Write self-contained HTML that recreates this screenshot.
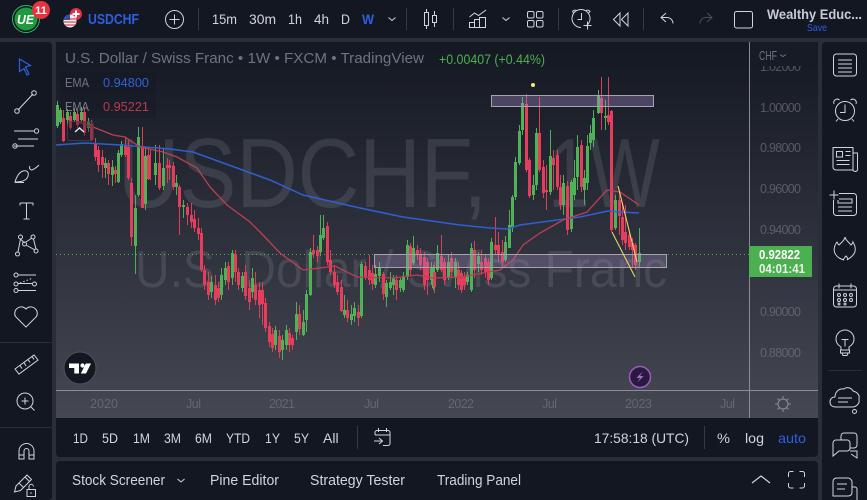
<!DOCTYPE html>
<html><head><meta charset="utf-8"><title>USDCHF</title>
<style>
html,body{margin:0;padding:0;background:#2a2e39;width:867px;height:500px;overflow:hidden}
svg{display:block}
text{font-family:"Liberation Sans",sans-serif}
.i{fill:none;stroke:#d1d4dc;stroke-width:1}
.ax{fill:#787b86;font-size:12.5px;opacity:.62}
.soft{filter:blur(.3px)}
</style></head><body>
<svg xmlns="http://www.w3.org/2000/svg" width="867" height="500" viewBox="0 0 867 500">
<defs><linearGradient id="bg" x1="0" y1="0" x2="0" y2="1"><stop offset="0" stop-color="#141823"/><stop offset="1" stop-color="#454853"/></linearGradient></defs>
<rect width="867" height="500" fill="#2a2e39"/>
<path d="M0 500v-5l3 5z" fill="#c23a7a"/>
<!-- chart -->
<rect x="56" y="42" width="762" height="376" fill="url(#bg)"/>
<text x="118" y="207" font-size="98" fill="#fff" fill-opacity=".1" textLength="369" lengthAdjust="spacingAndGlyphs">USDCHF,</text>
<text x="548" y="207" font-size="98" fill="#fff" fill-opacity=".1" textLength="112" lengthAdjust="spacingAndGlyphs">1W</text>
<text x="135" y="287" font-size="52" fill="#fff" fill-opacity=".1" textLength="532" lengthAdjust="spacingAndGlyphs">U.S. Dollar / Swiss Franc</text>
<rect x="60" y="72" width="96" height="46" fill="#131722" fill-opacity=".35"/>
<path d="M56 254.500H749" stroke="#4caf50" stroke-dasharray="1 3" fill="none"/>
<g class="soft">
<!-- candles: wicks -->
<path fill="none" stroke="#4fae57" stroke-width="1" d="M57.500 101V128M60.500 108V124M67.500 109V126M74.500 108V122M81.500 107V122M88.500 118V132M105.500 158V178M112.500 160V186M118.500 150V183M121.500 141V157M135.500 195V274M138.500 127V197M145.500 148V210M155.500 145V185M163.500 148V190M176.500 175V195M183.500 200V218M211.500 276V298M221.500 268V300M225.500 262V285M232.500 250V285M242.500 272V292M252.500 268V298M275.500 326V350M282.500 335V360M286.500 325V350M296.500 302V340M303.500 310V336M306.500 290V332M310.500 248V296M320.500 215V256M323.500 215V240M344.500 295V318M351.500 305V325M354.500 302V322M361.500 262V318M375.500 265V288M379.500 262V282M386.500 280V307M390.500 272V290M393.500 275V295M400.500 278V292M403.500 272V292M407.500 240V280M413.500 236V265M431.500 262V285M433.500 265V290M437.500 245V272M448.500 255V280M455.500 258V288M467.500 272V285M471.500 243V292M478.500 252V272M491.500 238V280M505.500 236V262M509.500 210V248M512.500 195V232M515.500 157V200M519.500 125V165M522.500 97V135M533.500 175V200M536.500 128V190M550.500 130V195M563.500 175V215M571.500 180V232M574.500 160V200M577.500 135V190M584.500 170V205M587.500 135V190M590.500 125V150M593.500 110V147M598.500 90V114M605.500 100V130M615.500 195V230M639.500 228V268"/>
<path fill="none" stroke="#e23b58" stroke-width="1" d="M63.500 110V142M70.500 112V130M77.500 110V128M84.500 108V136M91.500 120V141M95.500 138V161M98.500 146V172M102.500 150V178M108.500 160V185M115.500 166V183M125.500 137V157M128.500 140V180M131.500 178V246M142.500 127V208M148.500 148V180M150.500 150V180M159.500 145V190M167.500 158V183M169.500 160V180M173.500 162V190M179.500 185V235M187.500 203V225M191.500 203V228M194.500 210V232M198.500 218V240M201.500 228V272M204.500 265V290M208.500 272V300M215.500 275V305M218.500 282V302M228.500 262V290M235.500 250V282M238.500 268V290M245.500 265V300M249.500 280V310M255.500 272V305M259.500 282V318M262.500 282V325M265.500 298V332M269.500 322V347M272.500 328V352M279.500 330V358M289.500 328V352M292.500 335V350M299.500 305V335M313.500 235V258M317.500 246V262M327.500 222V265M330.500 250V275M334.500 265V288M337.500 275V295M341.500 280V312M347.500 300V322M358.500 305V326M365.500 262V280M369.500 255V285M372.500 265V290M383.500 272V300M396.500 275V300M410.500 243V275M417.500 245V260M420.500 248V270M424.500 252V290M427.500 258V295M434.500 262V293M441.500 235V272M444.500 258V285M451.500 252V278M458.500 262V290M461.500 270V293M464.500 272V290M474.500 241V278M481.500 250V275M485.500 255V278M488.500 258V285M495.500 217V255M498.500 232V262M502.500 240V268M526.500 94V172M529.500 158V198M539.500 97V172M543.500 160V198M546.500 165V210M553.500 150V190M557.500 150V190M560.500 175V210M567.500 181V235M581.500 140V192M601.500 77V130M608.500 77V125M611.500 110V232M619.500 190V235M622.500 202V245M625.500 205V250M629.500 232V250M632.500 238V268M635.500 243V270"/>
<!-- candles: bodies -->
<path fill="none" stroke="#4fb257" stroke-width="3" d="M57.500 105V126M60.500 110V122M67.500 112V120M74.500 112V120M81.500 112V120M88.500 122V128M105.500 163V168M112.500 167V175M118.500 153V182M121.500 144V155M135.500 208V246M138.500 137V195M145.500 156V204M155.500 163V175M163.500 168V186M176.500 183V187M183.500 205V207M211.500 282V292M221.500 275V295M225.500 268V280M232.500 253V278M242.500 276V288M252.500 278V292M275.500 330V345M282.500 340V350M286.500 330V345M296.500 314V332M303.500 322V335M306.500 294V320M310.500 252V295M320.500 235V252M323.500 228V238M344.500 310V315M351.500 314V320M354.500 308V316M361.500 264V316M375.500 274V285M379.500 268V276M386.500 283V297M390.500 282V288M393.500 278V285M400.500 280V288M403.500 276V290M407.500 245V277M413.500 248V263M431.500 268V280M433.500 268V288M437.500 253V270M448.500 262V278M455.500 262V278M467.500 275V282M471.500 248V290M478.500 256V264M491.500 242V278M505.500 242V260M509.500 225V248M512.500 197V228M515.500 162V197M519.500 131V163M522.500 103V130M533.500 185V195M536.500 133V185M550.500 156V192M563.500 183V205M571.500 182V229M574.500 178V195M577.500 147V177M584.500 178V190M587.500 146V183M590.500 133V143M593.500 118V140M598.500 95V113M605.500 116V118M615.500 200V228M639.500 253V262"/>
<path fill="none" stroke="#e83c5c" stroke-width="3" d="M63.500 118V141M70.500 116V128M77.500 114V125M84.500 112V133M91.500 124V140M95.500 143V157M98.500 150V165M102.500 157V165M108.500 163V174M115.500 170V174M125.500 146V155M128.500 147V178M131.500 183V237M142.500 146V208M148.500 155V179M159.500 163V188M167.500 165V168M169.500 165V168M173.500 166V187M179.500 187V207M187.500 207V215M191.500 215V222M194.500 219V228M198.500 228V234M201.500 233V270M204.500 270V285M208.500 282V295M215.500 285V300M218.500 288V298M228.500 266V282M235.500 254V272M238.500 272V285M245.500 272V296M249.500 288V302M255.500 285V300M259.500 290V305M262.500 290V304M265.500 303V328M269.500 326V342M272.500 334V348M279.500 336V352M289.500 333V345M292.500 338V345M299.500 314V329M313.500 250V254M317.500 250V256M327.500 226V262M330.500 260V272M334.500 272V285M337.500 282V292M341.500 287V311M347.500 310V318M358.500 312V318M365.500 266V277M369.500 270V280M372.500 273V284M383.500 274V294M396.500 280V290M410.500 246V270M417.500 250V255M420.500 255V265M424.500 257V285M427.500 262V280M434.500 272V287M441.500 256V270M444.500 262V280M451.500 258V272M458.500 270V285M461.500 273V290M464.500 276V285M474.500 250V270M481.500 262V270M485.500 258V272M488.500 262V280M495.500 245V250M498.500 245V255M502.500 252V262M526.500 104V170M529.500 160V196M539.500 133V170M543.500 167V193M546.500 190V192M553.500 158V165M557.500 155V187M560.500 187V205M567.500 186V230M581.500 145V187M601.500 98V113M608.500 115V122M611.500 111V230M619.500 200V216M622.500 217V240M625.500 232V243M629.500 235V247M632.500 243V250M635.500 245V265"/>
<!-- EMAs -->
<path fill="none" stroke="#2f5fd0" stroke-width="1.500" d="M56 145L85 143L120 145L170 149L193 152L237 168L270 180L303 195L360 208L403 217L460 225L490 228L507 229L520 225L557 220L580 217L608 211L620 212L639 213"/>
<path fill="none" stroke="#bb3f52" stroke-width="1.300" d="M78 122L93 127L113 135L125 137L140 147L163 152L177 157L197 168L210 187L227 205L250 222L260 232L280 253L303 270L320 268L335 266L357 277L393 278L417 275L433 278L463 277L487 272L500 270L513 260L523 245L540 233L563 220L587 212L607 190L620 192L639 205"/>
<!-- zones -->
<rect x="491.500" y="95.500" width="162" height="11" fill="#a68bc4" fill-opacity=".36" stroke="#a4a4af"/>
<rect x="374.500" y="254.500" width="292" height="13" fill="#a68bc4" fill-opacity=".3" stroke="#a4a4af"/>
<path d="M618 186L637 262M612 232L635 277" stroke="#e8d468" stroke-width="1.100" fill="none"/>
<circle cx="533" cy="85" r="2" fill="#fdea70"/>
</g>
<!-- legend -->
<text x="65" y="63" font-size="15" fill="#6f7380" textLength="359" lengthAdjust="spacingAndGlyphs">U.S. Dollar / Swiss Franc • 1W • FXCM • TradingView</text>
<text x="439" y="64" font-size="13.500" fill="#4caf50" textLength="106" lengthAdjust="spacingAndGlyphs">+0.00407 (+0.44%)</text>
<text x="65" y="87" font-size="13" fill="#6f7380" textLength="24" lengthAdjust="spacingAndGlyphs">EMA</text>
<text x="103" y="87" font-size="13" fill="#2e62d8" textLength="46" lengthAdjust="spacingAndGlyphs">0.94800</text>
<text x="65" y="111" font-size="13" fill="#7a7d88" textLength="24" lengthAdjust="spacingAndGlyphs">EMA</text>
<text x="103" y="111" font-size="13" fill="#b53c4f" textLength="46" lengthAdjust="spacingAndGlyphs">0.95221</text>
<rect x="67.500" y="121.500" width="26" height="19" rx="3" fill="#131722" fill-opacity=".35" stroke="#434651" stroke-opacity=".7"/>
<path d="M75 132L79.500 128L84 132" fill="none" stroke="#e0e3eb" stroke-width="1.500"/>
<!-- axes -->
<path d="M56 390.500H749M749.500 42V418M749 390.500H818" stroke="#8a8d97" stroke-width="1" fill="none"/>
<g class="ax">
<text x="760" y="71" textLength="41">1.02000</text>
<text x="760" y="112" textLength="41">1.00000</text>
<text x="760" y="152" textLength="41">0.98000</text>
<text x="760" y="193" textLength="41">0.96000</text>
<text x="760" y="234" textLength="41">0.94000</text>
<text x="760" y="316" textLength="41">0.90000</text>
<text x="760" y="357" textLength="41">0.88000</text>
<text x="90" y="408" textLength="28">2020</text><text x="186" y="408" textLength="15">Jul</text>
<text x="269" y="408" textLength="26">2021</text><text x="364" y="408" textLength="15">Jul</text>
<text x="448" y="408" textLength="26">2022</text><text x="542" y="408" textLength="15">Jul</text>
<text x="625" y="408" textLength="27">2023</text><text x="720" y="408" textLength="15">Jul</text>
</g>
<rect x="750" y="42" width="68" height="24" fill="#171b26"/>
<text x="759" y="60" font-size="13" fill="#6f7380" textLength="18" lengthAdjust="spacingAndGlyphs">CHF</text>
<path d="M780 54.500L783 56.500L786 54.500" fill="none" stroke="#6f7380"/>
<rect x="749" y="246" width="63" height="31" fill="#4caf50"/>
<text x="759" y="259" font-size="12.500" font-weight="bold" fill="#fff" textLength="41" lengthAdjust="spacingAndGlyphs">0.92822</text>
<text x="759" y="273" font-size="12.500" font-weight="bold" fill="#eaf5ea" textLength="46" lengthAdjust="spacingAndGlyphs">04:01:41</text>
<g fill="none" stroke="#8b8e98"><circle cx="783" cy="404" r="5"/><path d="M783 396v2.500M783 409.500v2.500M775 404h2.500M788.500 404h2.500M777.500 398.500l1.700 1.700M786.800 407.800l1.700 1.700M777.500 409.500l1.700-1.700M786.800 400.200l1.700-1.700"/></g>
<!-- tv logo -->
<circle cx="80" cy="368" r="16" fill="#131722" stroke="#50535e"/>
<path d="M69 363.500h10v10h-4.700v-5.500H69z" fill="#fff"/><circle cx="82.500" cy="365.500" r="2.100" fill="#fff"/><path d="M91 363.500l-5 10h-5.200l5-10z" fill="#fff"/>
<!-- lightning -->
<circle cx="640" cy="377" r="10.500" fill="#2a1a3d" stroke="#9c5bc4" stroke-width="1.500"/>
<path d="M642.500 371.500L636.500 378H640L637.500 382.500L643.500 376H640z" fill="#a868d0"/>

<!-- top bar -->
<rect width="867" height="38" fill="#131722"/>
<!-- left bar -->
<rect x="-6" y="42" width="58" height="458" rx="4" fill="#131722"/>
<rect x="0" y="342" width="52" height="1" fill="#2a2e39"/><rect x="0" y="427" width="52" height="1" fill="#2a2e39"/>
<!-- right bar -->
<rect x="822" y="42" width="50" height="463" rx="4" fill="#131722"/>
<!-- bottom -->
<path d="M56 418H818V453a4 4 0 0 1-4 4H60a4 4 0 0 1-4-4z" fill="#131722"/>
<path d="M60 461H814a4 4 0 0 1 4 4V500H56V465a4 4 0 0 1 4-4z" fill="#131722"/>
<!-- logo -->
<circle cx="26" cy="19" r="13.500" fill="#131722" stroke="#2fb861"/>
<circle cx="26" cy="19" r="11.500" fill="#1f9a3c"/>
<text x="17" y="24" font-size="13" font-weight="bold" font-style="italic" fill="#fff" textLength="17" lengthAdjust="spacingAndGlyphs">UE</text>
<circle cx="41" cy="10" r="9" fill="#e8323f"/>
<text x="35" y="14" font-size="11" font-weight="bold" fill="#fff" textLength="12" lengthAdjust="spacingAndGlyphs">11</text>
<circle cx="76" cy="14" r="6" fill="#e2304a"/><path d="M76 10.500v7M72.500 14h7" stroke="#fff" stroke-width="2"/>
<circle cx="70" cy="21" r="6.500" fill="#f0f0f0"/><path d="M64 19h12M64 22h12M65 25h10" stroke="#d84a50" stroke-width="1.200"/><path d="M63.500 20.500a6.500 6.500 0 0 1 6.500-6v5.500h-6.500z" fill="#2f4da8"/>
<text x="88" y="24" font-size="14.500" font-weight="bold" fill="#2d5fe0" textLength="51" lengthAdjust="spacingAndGlyphs">USDCHF</text>
<circle class="i" cx="174.500" cy="19.500" r="9"/><path class="i" d="M174.500 14.500v10M169.500 19.500h10"/>
<rect x="198" y="8" width="1" height="22" fill="#363a45"/>
<g fill="#d1d4dc" font-size="14"><text x="212" y="24" textLength="25" lengthAdjust="spacingAndGlyphs">15m</text><text x="249" y="24" textLength="27" lengthAdjust="spacingAndGlyphs">30m</text><text x="288" y="24" textLength="14" lengthAdjust="spacingAndGlyphs">1h</text><text x="314" y="24" textLength="15" lengthAdjust="spacingAndGlyphs">4h</text><text x="341" y="24" textLength="9" lengthAdjust="spacingAndGlyphs">D</text></g>
<text x="362" y="24" font-size="14" font-weight="bold" fill="#2d5fe0" textLength="12" lengthAdjust="spacingAndGlyphs">W</text>
<path class="i" d="M388.500 17.500l3.500 3l3.500-3"/>
<rect x="406" y="8" width="1" height="22" fill="#363a45"/>
<g class="i"><rect x="424.500" y="12.500" width="4" height="13"/><path d="M426.500 9v3.500M426.500 25.500v3.500"/><rect x="432.500" y="15.500" width="4" height="7"/><path d="M434.500 11v4.500M434.500 22.500v4.500"/></g>
<rect x="453" y="8" width="1" height="22" fill="#363a45"/>
<g class="i"><path d="M469.500 17l5-4l4 2.500l7.500-5.500"/><path d="M469.500 27.500v-5h5v5M474.500 27.500v-8h5v8M479.500 27.500v-10h6v10zM469 27.500h17"/></g>
<path class="i" d="M502.500 17.500l3.500 3l3.500-3"/>
<g class="i"><rect x="527.500" y="11.500" width="6.500" height="6.500" rx="1.500"/><rect x="536.500" y="11.500" width="6.500" height="6.500" rx="1.500"/><rect x="527.500" y="20.500" width="6.500" height="6.500" rx="1.500"/><rect x="536.500" y="20.500" width="6.500" height="6.500" rx="1.500"/></g>
<rect x="558" y="8" width="1" height="22" fill="#363a45"/>
<g class="i"><path d="M586 26a9 9 0 1 0-5 1.500"/><path d="M581.500 13v6.500h-4"/><path d="M574 13l-1.500-1.500a3 3 0 0 1 4-1M588.500 13l1.500-1.500a3 3 0 0 0-4-1"/><path d="M587.500 21.500v8M583.500 25.500h8"/></g>
<g class="i"><path d="M620 13l-6.500 6.500l6.500 6.500zM628 13l-6.500 6.500l6.500 6.500z"/></g>
<rect x="643" y="8" width="1" height="22" fill="#363a45"/>
<path class="i" d="M666 13l-5 4.500l5 4.500M661 17.500h6a6 6 0 0 1 6 6"/>
<path d="M707 13l5 4.500l-5 4.500M712 17.500h-6a6 6 0 0 0-6 6" fill="none" stroke="#4c4f5a"/>
<rect class="i" x="734.500" y="11.500" width="18" height="16.500" rx="2"/>
<text x="767" y="19" font-size="13.500" font-weight="bold" fill="#c8cbd3" textLength="95" lengthAdjust="spacingAndGlyphs">Wealthy Educ...</text>
<text x="807" y="31" font-size="10.500" fill="#2d5fe0" textLength="20" lengthAdjust="spacingAndGlyphs">Save</text>

<!-- left icons -->
<path d="M19.500 59l11 6.500-5 1.500 3.500 7-2 1-3-6.500-4.500 3z" fill="none" stroke="#2d5fe0" stroke-width="1.200"/>
<g class="i">
<path d="M18 110L33 94"/><circle cx="17" cy="111" r="2.300"/><circle cx="34" cy="93" r="2.300"/>
<path d="M14 131H34M18 139H38M14 146H34" /><circle cx="36.500" cy="131" r="2.200"/><circle cx="15" cy="146" r="2.200"/>
<path d="M15 182c1-4 4-10 8-11c4-1 6 1 5 5c-1 4-5 6-13 6zM15 182.500h9M31 170c3 0 6-3 8-5M31 170c-2-2-2-2-1-4"/>
<path d="M20 203H33M26.500 203V219M20 203v2.500M33 203v2.500M23.500 219h6"/>
<circle cx="20.500" cy="237" r="2"/><circle cx="33" cy="237" r="2"/><circle cx="24.500" cy="244" r="2"/><circle cx="17.500" cy="254" r="2"/><circle cx="36" cy="251" r="2"/>
<path d="M18 252l2.500-13M20.500 239l4 4M26 242l6-4M33.500 239l2.500 10M26 245l9 5"/>
<path d="M18 275H36M18 283.500H32M18 290.500H36"/><circle cx="16" cy="275" r="2"/><circle cx="16" cy="284" r="2"/><circle cx="16" cy="290.500" r="2"/><circle cx="34.500" cy="284" r="2"/><path stroke-dasharray="1.500 2" d="M20 283l13-5"/>
<path d="M26 327l-10.500-10.500a6.500 6.500 0 0 1 10.500-7.500a6.500 6.500 0 0 1 10.500 7.500z" />
<path d="M15 369l19-14 4 5-19 14zM20 365.500l2 3M24 362.500l2 3.500M28 359.500l2 3M32 356.500l2 3"/>
<circle cx="25" cy="401" r="8"/><path d="M31 407l3.500 3.500M25 397.500v7M21.500 401h7"/>
<path d="M19 459v-8a7.500 7.500 0 0 1 15 0v8h-5v-8a2.500 2.500 0 0 0-5 0v8zM19 455h5M29 455h5"/>
<path d="M16 486l11-11 4.500 4.500-11 11-6 1.500zM19 483l4.500 4.500M25 477l4.500 4.500"/><rect x="27" y="489.500" width="8.500" height="7"/><path d="M29 489v-2.500a2.200 2.200 0 0 1 4.400 0"/>
</g>
<circle cx="31" cy="493" r=".8" fill="#d1d4dc"/>
<!-- right icons -->
<g class="i">
<rect x="833.500" y="54" width="23" height="22" rx="3"/><path d="M838 60h14M838 64h14M838 68h14M838 72h14" />
<circle cx="845" cy="111" r="9.500"/><path d="M845 104.500V112.500H840"/><path d="M834 104a3.500 3.500 0 0 1 5.500-4M856 104a3.500 3.500 0 0 0-5.500-4M838 119l-2 2.500M852 119l2 2.500"/>
<path d="M853 170H836a3 3 0 0 1-3-3V147.500h20V170M853 153h4.500v15a2 2 0 0 1-4.500 2"/><rect x="836.500" y="151.500" width="6" height="5.500"/><path d="M845.500 151.500h5M845.500 155.500h5M836.500 160.500h13M836.500 164.500h13"/>
<rect x="833.500" y="193.500" width="23" height="22" rx="3"/><path d="M838 199h14v4h-14zM838 207h14M838 211h14"/><rect x="829" y="190" width="10" height="10" fill="#131722" stroke="none"/><path d="M829.500 195h9M834 190.500v9"/>
<path d="M845 237c1 4 4 5 6 8c1-1 2-2 2-3c3 5 3 10 0 13c-2 3-5 4-6 5c1-1 1-2-1-4c-2 2-3 4-2 4c-3-1-6-2-8-5c-3-4-2-9 1-13c1 1 1 3 2 3c2-2 6-5 6-8z"/>
<rect x="833.500" y="286" width="23" height="21" rx="3"/><path d="M839 283.500v5M851 283.500v5M834 290h22"/><circle cx="839" cy="295" r="1.500"/><circle cx="845" cy="295" r="1.500"/><circle cx="851" cy="295" r="1.500"/><circle cx="839" cy="300" r="1.500"/><circle cx="845" cy="300" r="1.500"/><circle cx="851" cy="300" r="1.500"/><circle cx="839" cy="304" r="1"/><circle cx="845" cy="304" r="1"/>
<path d="M841 350v-3c-3-2-5-4-5-8a9 9 0 0 1 18 0c0 4-2 6-5 8v3zM840.500 350h9v3h-9zM842 353h6l-1 2.500h-4zM841.500 339.500h7M845 339.500v7"/>
<path d="M836 407c-4 0-6-2-6-5s2-5 5-5c0-5 4-9 9-8c2-2 7-2 9 2c4 1 7 4 6 8c1 5-3 8-7 8z"/><path d="M838 398h14M838 402h10"/><circle cx="854.500" cy="411.500" r="2"/>
<path d="M841 440v-4a3 3 0 0 1 3-3h10a3 3 0 0 1 3 3v9a3 3 0 0 1-3 3h-4"/><path d="M836 440h11a3 3 0 0 1 3 3v5a3 3 0 0 1-3 3h-8l-6 5v-13a3 3 0 0 1 3-3z"/><path d="M850 451h7v7l-6-4"/>
<path d="M833 482c0-2 1-4 4-4h11c2 0 4 2 4 4v10c0 3-2 4-4 4h-15z"/><path d="M837 484h10M837 489h8"/><path d="M852 487h3c1 0 2 1 2 2v11"/>
</g>
<rect x="828" y="370" width="34" height="1" fill="#2a2e39"/>
<!-- bottom toolbar -->
<g fill="#d1d4dc" font-size="14">
<text x="73" y="443" textLength="15" lengthAdjust="spacingAndGlyphs">1D</text><text x="102" y="443" textLength="16" lengthAdjust="spacingAndGlyphs">5D</text><text x="133" y="443" textLength="17" lengthAdjust="spacingAndGlyphs">1M</text><text x="164" y="443" textLength="17" lengthAdjust="spacingAndGlyphs">3M</text><text x="195" y="443" textLength="17" lengthAdjust="spacingAndGlyphs">6M</text><text x="226" y="443" textLength="24" lengthAdjust="spacingAndGlyphs">YTD</text><text x="265" y="443" textLength="15" lengthAdjust="spacingAndGlyphs">1Y</text><text x="294" y="443" textLength="15" lengthAdjust="spacingAndGlyphs">5Y</text><text x="323" y="443">All</text>
<text x="594" y="443" textLength="95" lengthAdjust="spacingAndGlyphs">17:58:18 (UTC)</text>
<text x="717" y="443" textLength="13" lengthAdjust="spacingAndGlyphs">%</text><text x="745" y="443" textLength="19" lengthAdjust="spacingAndGlyphs">log</text>
</g>
<text x="778" y="443" font-size="14" fill="#2d5fe0" textLength="28" lengthAdjust="spacingAndGlyphs">auto</text>
<rect x="357" y="426" width="1" height="23" fill="#363a45"/><rect x="704" y="426" width="1" height="23" fill="#363a45"/>
<path class="i" d="M375 435v-2.500a2 2 0 0 1 2-2h11a2 2 0 0 1 2 2v11a2 2 0 0 1-2 2h-5M375 435h15M378.500 428v4M386.500 428v4M374 441h8M379 438l3.500 3l-3.500 3"/>
<g fill="#d1d4dc" font-size="14.500">
<text x="72" y="485" textLength="93" lengthAdjust="spacingAndGlyphs">Stock Screener</text><text x="210" y="485" textLength="69" lengthAdjust="spacingAndGlyphs">Pine Editor</text><text x="310" y="485" textLength="95" lengthAdjust="spacingAndGlyphs">Strategy Tester</text><text x="437" y="485" textLength="84" lengthAdjust="spacingAndGlyphs">Trading Panel</text>
</g>
<path class="i" d="M177.500 479l3.500 3l3.500-3"/>
<path d="M752 483l9-7l9 7" fill="none" stroke="#d1d4dc" stroke-width="1.200"/>
<path class="i" d="M788.500 477v-3.500a2 2 0 0 1 2-2h3M799.500 471.500h3a2 2 0 0 1 2 2v3.500M804.500 483v3a2 2 0 0 1-2 2h-3M793.500 488h-3a2 2 0 0 1-2-2v-3"/>
</svg>
</body></html>
